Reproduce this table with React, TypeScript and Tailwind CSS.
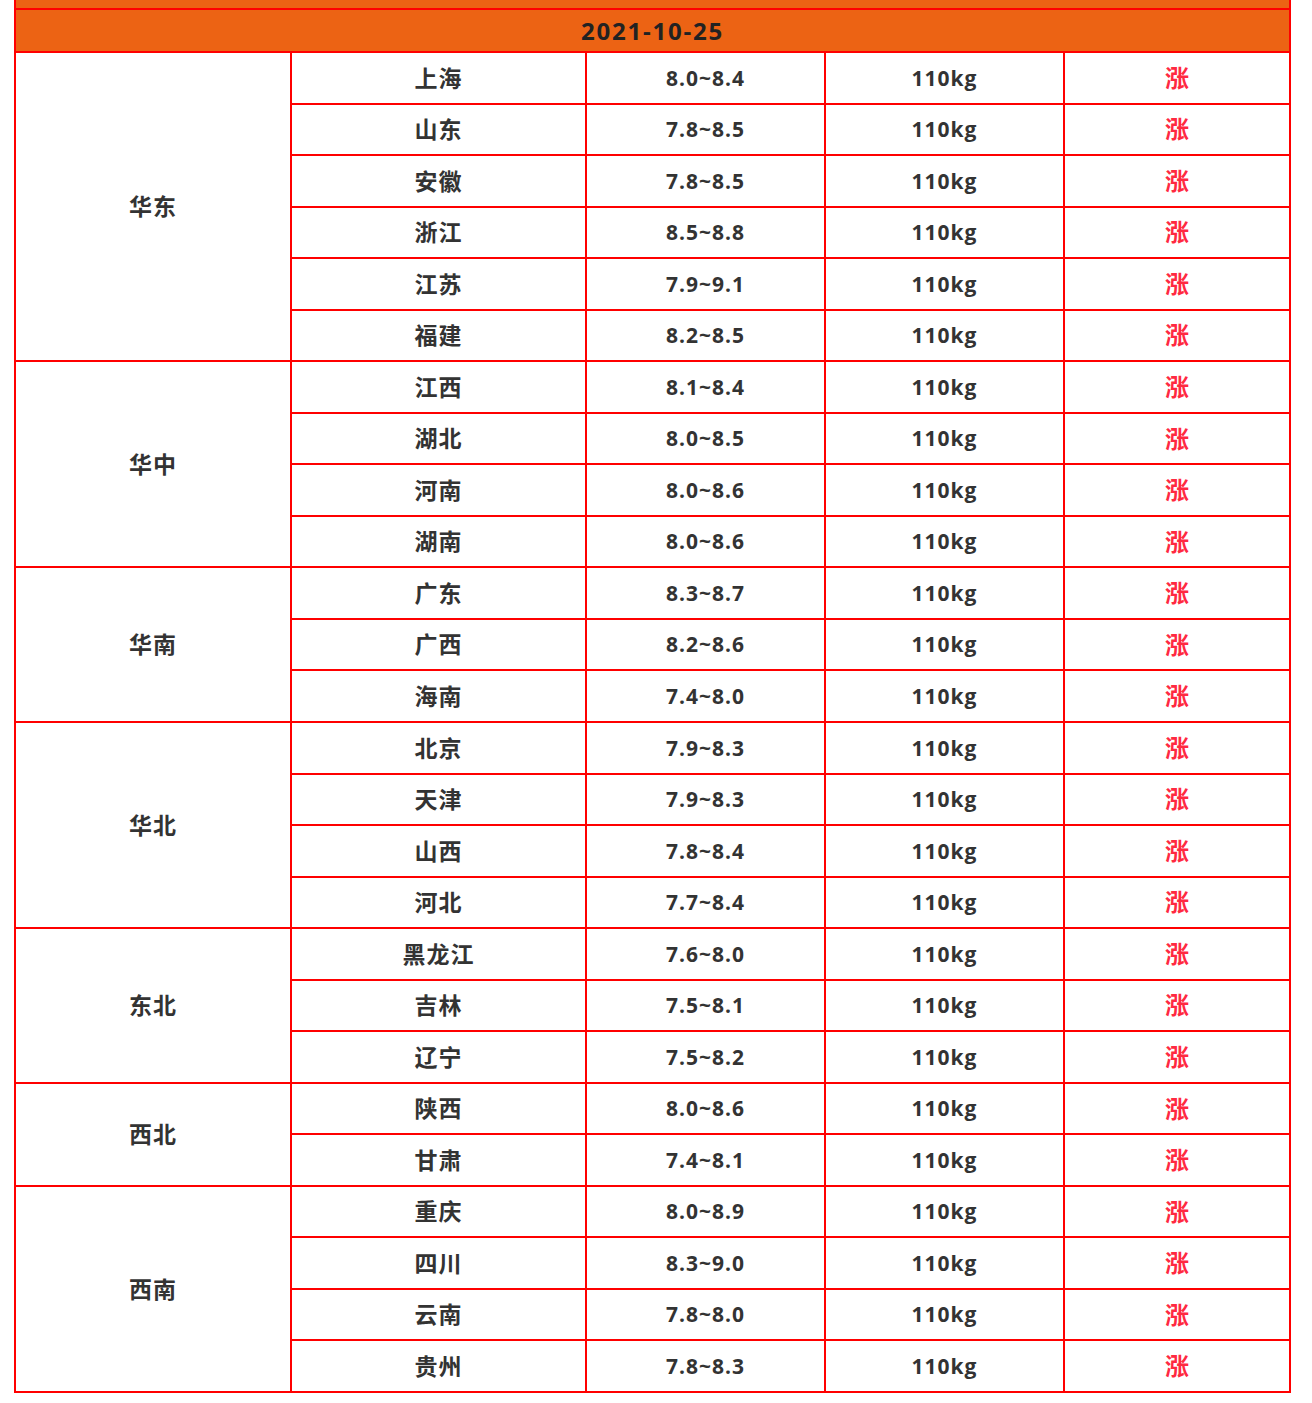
import React from "react";

type Row = { p: string; r: string };
type Region = { name: string; span: string; rows: Row[] };

const data: Region[] = [
  {
    name: "华东",
    span: "row-span-6",
    rows: [
      { p: "上海", r: "8.0~8.4" },
      { p: "山东", r: "7.8~8.5" },
      { p: "安徽", r: "7.8~8.5" },
      { p: "浙江", r: "8.5~8.8" },
      { p: "江苏", r: "7.9~9.1" },
      { p: "福建", r: "8.2~8.5" },
    ],
  },
  {
    name: "华中",
    span: "row-span-4",
    rows: [
      { p: "江西", r: "8.1~8.4" },
      { p: "湖北", r: "8.0~8.5" },
      { p: "河南", r: "8.0~8.6" },
      { p: "湖南", r: "8.0~8.6" },
    ],
  },
  {
    name: "华南",
    span: "row-span-3",
    rows: [
      { p: "广东", r: "8.3~8.7" },
      { p: "广西", r: "8.2~8.6" },
      { p: "海南", r: "7.4~8.0" },
    ],
  },
  {
    name: "华北",
    span: "row-span-4",
    rows: [
      { p: "北京", r: "7.9~8.3" },
      { p: "天津", r: "7.9~8.3" },
      { p: "山西", r: "7.8~8.4" },
      { p: "河北", r: "7.7~8.4" },
    ],
  },
  {
    name: "东北",
    span: "row-span-3",
    rows: [
      { p: "黑龙江", r: "7.6~8.0" },
      { p: "吉林", r: "7.5~8.1" },
      { p: "辽宁", r: "7.5~8.2" },
    ],
  },
  {
    name: "西北",
    span: "row-span-2",
    rows: [
      { p: "陕西", r: "8.0~8.6" },
      { p: "甘肃", r: "7.4~8.1" },
    ],
  },
  {
    name: "西南",
    span: "row-span-4",
    rows: [
      { p: "重庆", r: "8.0~8.9" },
      { p: "四川", r: "8.3~9.0" },
      { p: "云南", r: "7.8~8.0" },
      { p: "贵州", r: "7.8~8.3" },
    ],
  },
];

const base = "bg-white flex items-center justify-center font-bold text-[#333333]";
const cjk = `${base} text-[23px] tracking-[1px]`;
const num = `${base} text-[21px] tracking-[1px] pt-[1px]`;

export default function App() {
  return (
    <div className="w-[1312px] h-[1403px] bg-white font-['Open_Sans','Noto_Sans_CJK_SC',sans-serif]">
      <div className="ml-[14px] w-[1277px] bg-[#ff0000] px-[2px] pb-[2px]">
        <div className="grid h-[1391px] gap-[2px] grid-cols-[274px_293px_237px_237px_224px] grid-rows-[8px_41px_repeat(26,minmax(0,1fr))]">
          <div className="col-span-5 bg-[#ec6314]" />
          <div className="col-span-5 bg-[#ec6314] flex items-center justify-center font-bold text-[24px] tracking-[1.8px] text-[#222222]">
            2021-10-25
          </div>
          {data.map((reg) => (
            <React.Fragment key={reg.name}>
              <div className={`${cjk} col-start-1 ${reg.span}`}>{reg.name}</div>
              {reg.rows.map((row) => (
                <React.Fragment key={row.p}>
                  <div className={cjk}>{row.p}</div>
                  <div className={num}>{row.r}</div>
                  <div className={num}>110kg</div>
                  <div className="bg-white flex items-center justify-center font-bold text-[24px] text-[#ff2941]">
                    涨
                  </div>
                </React.Fragment>
              ))}
            </React.Fragment>
          ))}
        </div>
      </div>
    </div>
  );
}
